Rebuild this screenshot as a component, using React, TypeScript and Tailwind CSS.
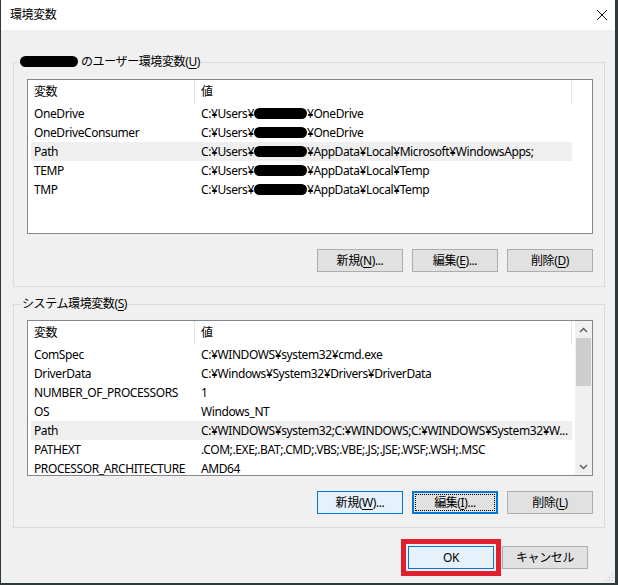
import React from "react";

const FONT = "font-['Noto_Sans','Noto_Sans_CJK_JP',sans-serif]";

type Row = { name: string; value: React.ReactNode; selected?: boolean };

function Blob({ w }: { w: string }) {
  return <span className={`inline-block h-[11px] ${w} rounded-full bg-black align-[-1px]`} />;
}

const userRows: Row[] = [
  { name: "OneDrive", value: <>C:¥Users¥<Blob w="w-[53px]" />¥OneDrive</> },
  { name: "OneDriveConsumer", value: <>C:¥Users¥<Blob w="w-[53px]" />¥OneDrive</> },
  { name: "Path", value: <>C:¥Users¥<Blob w="w-[53px]" />¥AppData¥Local¥Microsoft¥WindowsApps;</>, selected: true },
  { name: "TEMP", value: <>C:¥Users¥<Blob w="w-[53px]" />¥AppData¥Local¥Temp</> },
  { name: "TMP", value: <>C:¥Users¥<Blob w="w-[53px]" />¥AppData¥Local¥Temp</> },
];

const systemRows: Row[] = [
  { name: "ComSpec", value: "C:¥WINDOWS¥system32¥cmd.exe" },
  { name: "DriverData", value: "C:¥Windows¥System32¥Drivers¥DriverData" },
  { name: "NUMBER_OF_PROCESSORS", value: "1" },
  { name: "OS", value: "Windows_NT" },
  { name: "Path", value: "C:¥WINDOWS¥system32;C:¥WINDOWS;C:¥WINDOWS¥System32¥W...", selected: true },
  { name: "PATHEXT", value: ".COM;.EXE;.BAT;.CMD;.VBS;.VBE;.JS;.JSE;.WSF;.WSH;.MSC" },
  { name: "PROCESSOR_ARCHITECTURE", value: "AMD64" },
];

function ListView({ rows, scroll, height }: { rows: Row[]; scroll?: boolean; height: string }) {
  return (
    <div className={`flex ${height} border border-[#828790] bg-white overflow-hidden`}>
      <div className="flex-1 pl-[3px]">
        <div className="flex h-[24px] items-center">
          <div className="w-[164px] h-full border-r border-[#e5e5e5] pl-[3px] leading-[24px]">変数</div>
          <div className="w-[377px] h-full border-r border-[#e5e5e5] pl-[6px] leading-[24px]">値</div>
        </div>
        {rows.map((r) => (
          <div
            key={r.name}
            className={`flex w-[541px] h-[19px] leading-[19px] whitespace-nowrap ${r.selected ? "bg-[#efefef]" : ""}`}
          >
            <div className="w-[164px] pl-[3px]">{r.name}</div>
            <div className="w-[377px] pl-[6px] overflow-hidden">{r.value}</div>
          </div>
        ))}
      </div>
      {scroll && (
        <div className="w-[17px] flex flex-col bg-[#f0f0f0]">
          <div className="h-[17px] flex items-center justify-center">
            <svg width="9" height="6" viewBox="0 0 9 6">
              <path d="M1 5 L4.5 1.5 L8 5" fill="none" stroke="#606060" strokeWidth="1.5" />
            </svg>
          </div>
          <div className="mx-[1px] h-[48px] bg-[#cdcdcd]" />
          <div className="flex-1" />
          <div className="h-[17px] flex items-center justify-center">
            <svg width="9" height="6" viewBox="0 0 9 6">
              <path d="M1 1 L4.5 4.5 L8 1" fill="none" stroke="#606060" strokeWidth="1.5" />
            </svg>
          </div>
        </div>
      )}
    </div>
  );
}

function Btn({
  label,
  k,
  tail = "",
  variant = "normal",
}: {
  label: string;
  k?: string;
  tail?: string;
  variant?: "normal" | "hover" | "focus";
}) {
  const look =
    variant === "hover"
      ? "border border-[#0078d7] bg-[#e5f1fb]"
      : variant === "focus"
      ? "border-2 border-[#0078d7] bg-[#e1e1e1] outline outline-1 outline-dotted outline-black outline-offset-[-4px]"
      : "border border-[#adadad] bg-[#e1e1e1]";
  return (
    <button className={`w-[86px] h-[23px] flex items-center justify-center text-[12px] text-black ${look}`}>
      {label}
      {k && (
        <>
          (<span className="underline underline-offset-2">{k}</span>)
        </>
      )}
      {tail}
    </button>
  );
}

export default function App() {
  return (
    <div
      className={`relative w-[618px] h-[585px] bg-[#f0f0f0] border-l border-r-[3px] border-b-2 border-[#2e3a3a] text-[12px] tracking-[-0.4px] text-black ${FONT}`}
    >
      {/* title bar */}
      <div className="h-[30px] bg-white flex items-center justify-between pl-[9px] pr-[8px]">
        <span className="text-[12px]">環境変数</span>
        <svg width="10" height="10" viewBox="0 0 10 10">
          <path d="M0 0 L10 10 M10 0 L0 10" stroke="#111" strokeWidth="1" />
        </svg>
      </div>

      <div className="pl-[12px] pr-[10px] pt-[24px]">
        <fieldset className="border border-[#dcdcdc] pl-[13px] pr-[11px] pt-[9px] pb-[14px]">
          <legend className="ml-[-8px] px-[1px] leading-[16px] text-[12px]">
            <Blob w="w-[58px]" />
            <span className="ml-[3px]">
              のユーザー環境変数(<span className="underline underline-offset-2">U</span>)
            </span>
          </legend>
          <ListView rows={userRows} height="h-[155px]" />
          <div className="flex justify-end gap-[9px] mt-[15px]">
            <Btn label="新規" k="N" tail="..." />
            <Btn label="編集" k="E" tail="..." />
            <Btn label="削除" k="D" />
          </div>
        </fieldset>

        <fieldset className="mt-[9px] border border-[#dcdcdc] pl-[13px] pr-[11px] pt-[8px] pb-[13px]">
          <legend className="ml-[-6px] px-[1px] leading-[16px] text-[12px]">
            システム環境変数(<span className="underline underline-offset-2">S</span>)
          </legend>
          <ListView rows={systemRows} height="h-[156px]" scroll />
          <div className="flex justify-end gap-[9px] mt-[15px]">
            <Btn label="新規" k="W" tail="..." variant="hover" />
            <Btn label="編集" k="I" tail="..." variant="focus" />
            <Btn label="削除" k="L" />
          </div>
        </fieldset>

        <div className="flex justify-end items-center gap-[1px] mt-[11px] pr-[17px]">
          <div className="border-[5px] border-[#e0202e] p-[2px]">
            <Btn label="OK" variant="hover" />
          </div>
          <Btn label="キャンセル" />
        </div>
      </div>

      {/* resize grip */}
      <svg className="absolute right-[1px] bottom-[1px]" width="8" height="8" viewBox="0 0 8 8">
        <rect x="6" y="0" width="1" height="1" fill="#bcbcbc" />
        <rect x="3" y="3" width="1" height="1" fill="#bcbcbc" />
        <rect x="6" y="3" width="1" height="1" fill="#bcbcbc" />
        <rect x="0" y="6" width="1" height="1" fill="#bcbcbc" />
        <rect x="3" y="6" width="1" height="1" fill="#bcbcbc" />
        <rect x="6" y="6" width="1" height="1" fill="#bcbcbc" />
      </svg>
    </div>
  );
}
